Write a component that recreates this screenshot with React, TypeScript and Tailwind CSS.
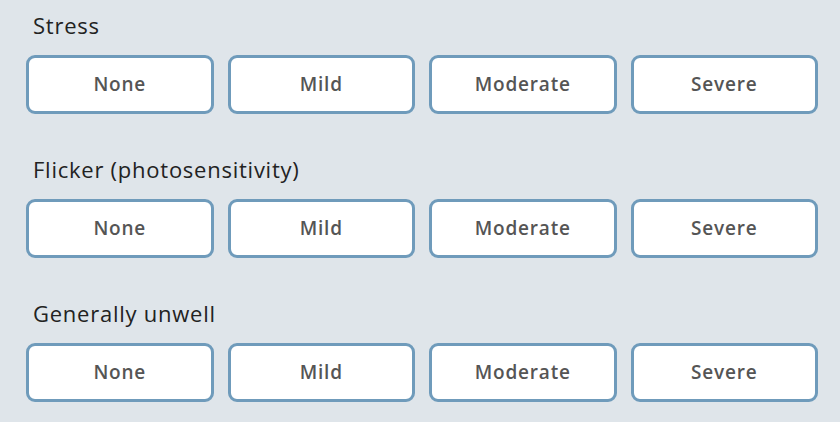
import React from "react";

const symptoms = ["Stress", "Flicker (photosensitivity)", "Generally unwell"];
const levels = ["None", "Mild", "Moderate", "Severe"];

export default function App() {
  return (
    <div
      className="w-[840px] h-[422px] bg-[#dfe5ea] px-[26px] pt-[10px] flex flex-col gap-[40px] overflow-hidden"
      style={{ fontFamily: "'Open Sans', Lato, sans-serif" }}
    >
      {symptoms.map((name) => (
        <div key={name} className="flex flex-col gap-[15px]">
          <div className="pl-[7px] text-[22px] leading-[30px] tracking-[0.75px] text-[#222]">{name}</div>
          <div className="grid grid-cols-4 gap-[14px] w-[792px]">
            {levels.map((lvl) => (
              <button
                key={lvl}
                type="button"
                className="h-[59px] rounded-[9px] border-[3px] border-[#6f9bbb] bg-white text-[19px] font-semibold tracking-[0.8px] text-[#555]"
              >
                {lvl}
              </button>
            ))}
          </div>
        </div>
      ))}
    </div>
  );
}
